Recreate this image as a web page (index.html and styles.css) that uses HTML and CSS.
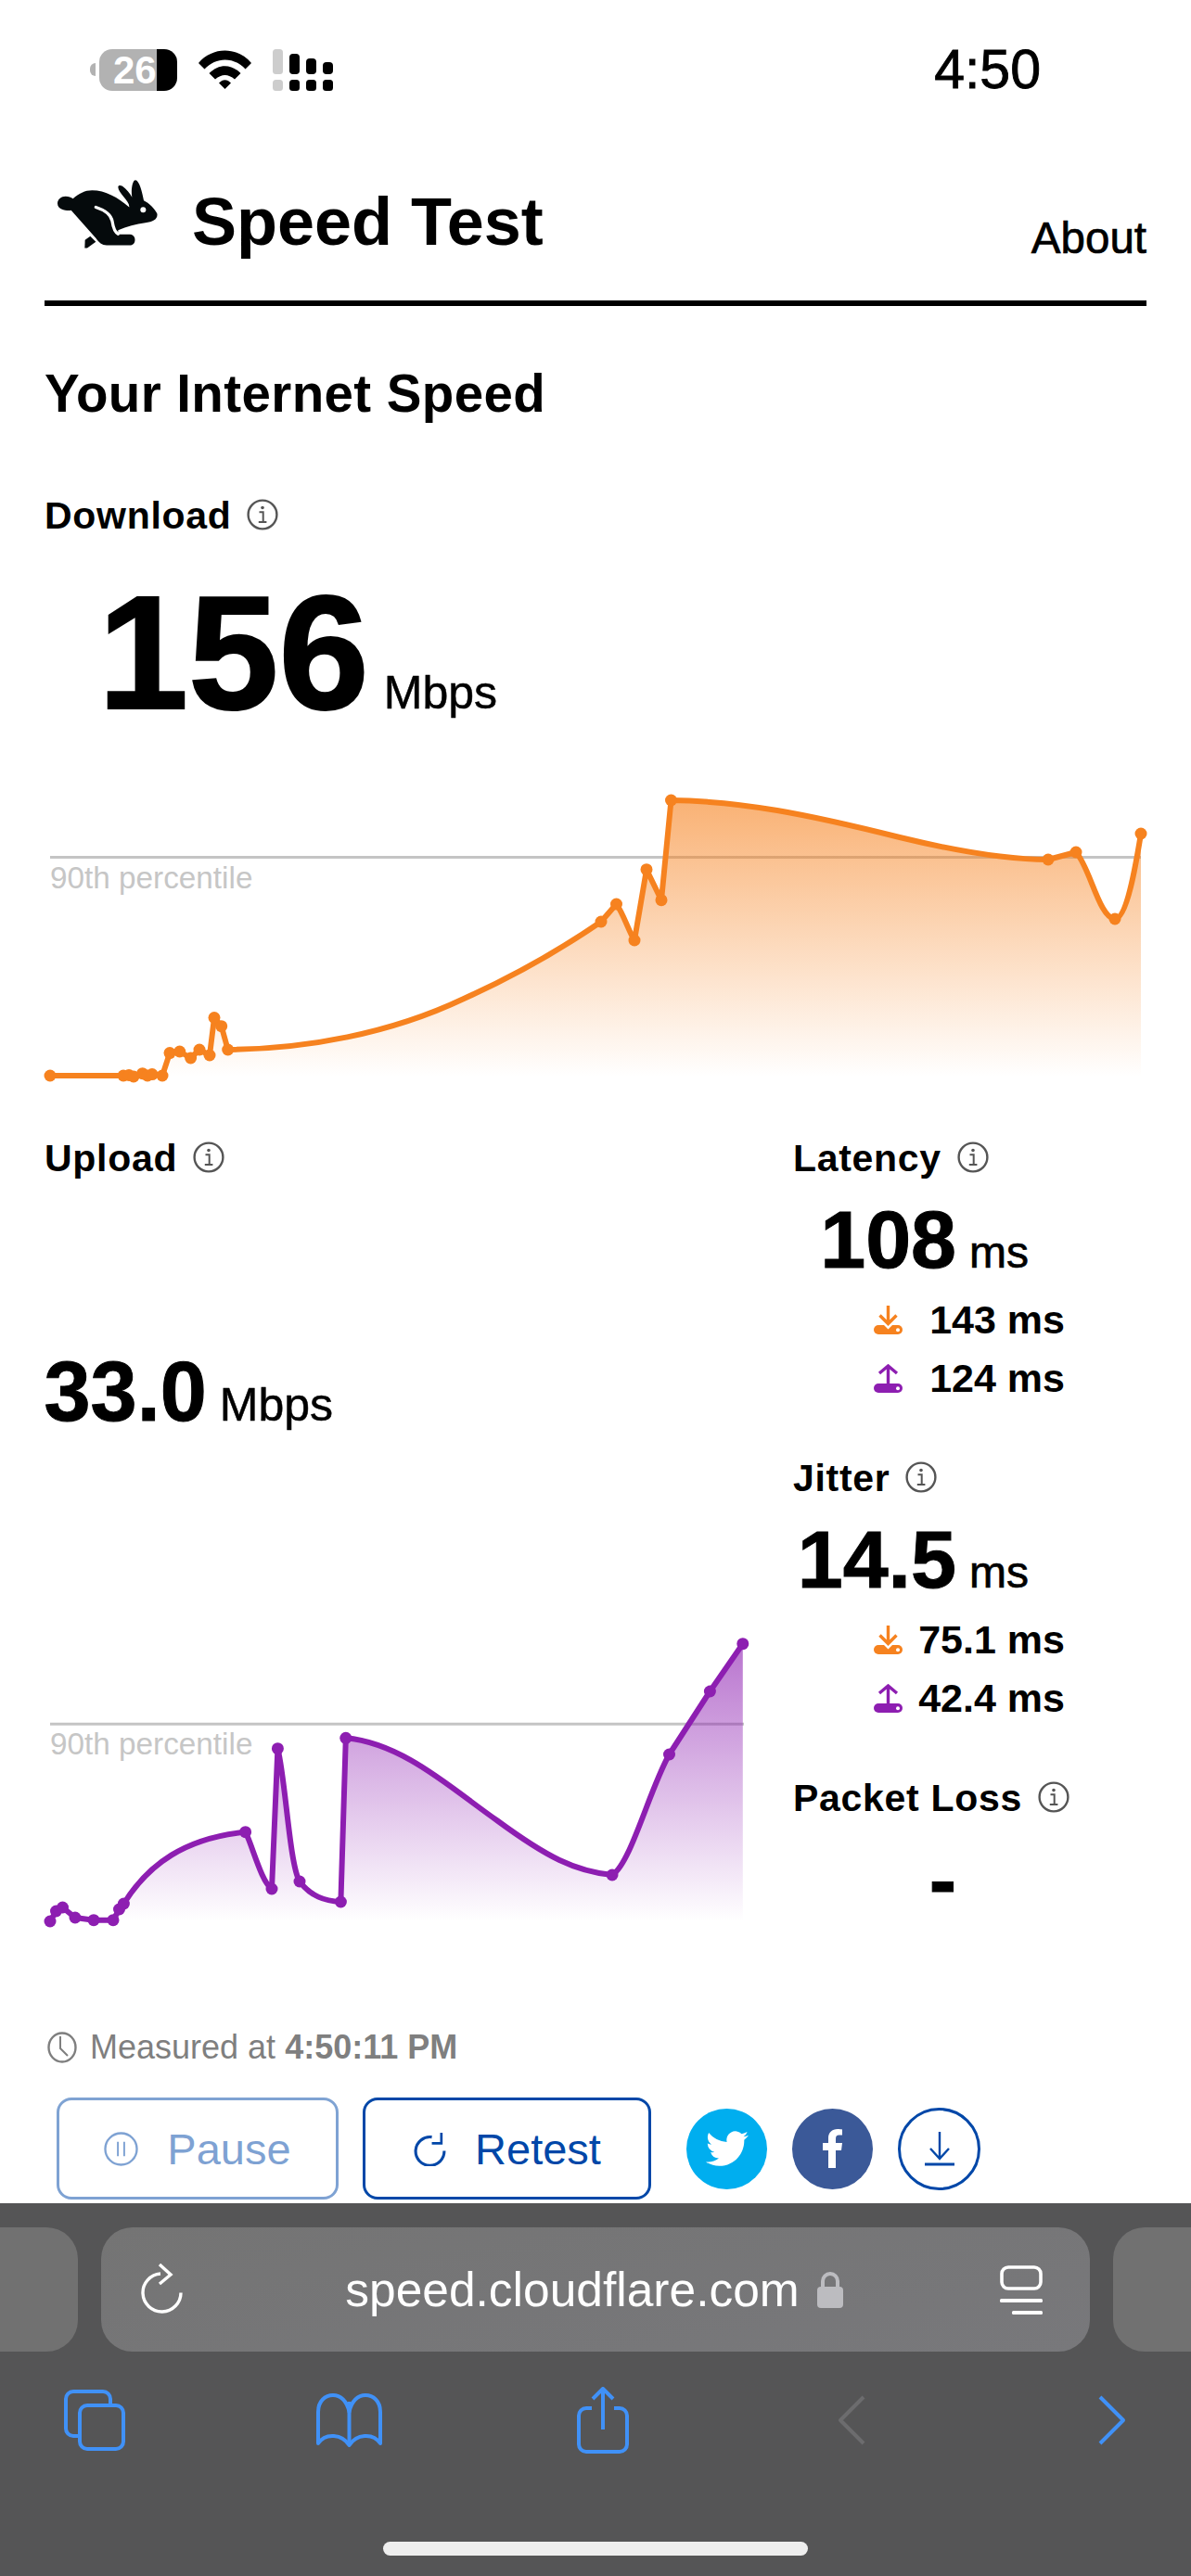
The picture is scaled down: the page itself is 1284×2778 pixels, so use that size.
FILE: index.html
```html
<!DOCTYPE html>
<html lang="en">
<head>
<meta charset="utf-8">
<title>Speed Test</title>
<link rel="stylesheet" href="styles.css">
</head>
<body>
<svg class="defs" width="0" height="0" aria-hidden="true">
  <defs>
    <symbol id="info" viewBox="0 0 34 34">
      <circle cx="17" cy="17" r="15.400" fill="none" stroke="#555" stroke-width="2.400"/>
      <circle cx="17" cy="9.500" r="1.800" fill="#555"/>
      <path d="M13.500 14.200h4.200v10.600M12.800 25h8.600" fill="none" stroke="#555" stroke-width="2"/>
    </symbol>
    <symbol id="down" viewBox="0 0 31 31">
      <rect x="0" y="21" width="31" height="10" rx="5" fill="currentColor"/>
      <circle cx="26" cy="26.200" r="2" fill="#fff"/>
      <path d="M4 12l11.500 11.500L27 12" fill="none" stroke="#fff" stroke-width="3"/>
      <path d="M15.500 0v18M6.500 10.500l9 9 9-9" fill="none" stroke="currentColor" stroke-width="3.400"/>
    </symbol>
    <symbol id="up" viewBox="0 0 31 31">
      <rect x="0" y="21" width="31" height="10" rx="5" fill="currentColor"/>
      <circle cx="26" cy="26.200" r="2" fill="#fff"/>
      <path d="M15.500 2v20M6 10l9.500-8 9.500 8" fill="none" stroke="currentColor" stroke-width="3.400"/>
    </symbol>
    <linearGradient id="fillOrange" x1="0" y1="0" x2="0" y2="1">
      <stop offset="0" stop-color="#f6821f" stop-opacity=".62"/>
      <stop offset="1" stop-color="#f6821f" stop-opacity="0"/>
    </linearGradient>
    <linearGradient id="fillPurple" x1="0" y1="0" x2="0" y2="1">
      <stop offset="0" stop-color="#8d1eb1" stop-opacity=".62"/>
      <stop offset="1" stop-color="#8d1eb1" stop-opacity="0"/>
    </linearGradient>
  </defs>
</svg>

<div class="phone">
  <div class="status">
    <div class="status-left">
      <span class="battery-nub"></span>
      <span class="battery">26</span>
      <svg class="wifi" viewBox="0 0 57 42">
        <path d="M0 14C15-4 42-4 57 14l-6.500 6.500C38 7 19 7 6.500 20.500z"/>
        <path d="M11.500 25C22 14.500 35 14.500 45.500 25L39 31.500C32 25.500 25 25.500 18 31.500z"/>
        <path d="M22 35.500C26 31 31 31 35 35.500L28.500 42z"/>
      </svg>
      <svg class="signal" viewBox="0 0 65 45">
        <rect class="off" x="0" y="0" width="11" height="27" rx="3.500"/>
        <rect class="off" x="0" y="33" width="11" height="12" rx="3.500"/>
        <rect x="18" y="5" width="11" height="22" rx="4"/>
        <rect x="18" y="33" width="11" height="12" rx="3.500"/>
        <rect x="36" y="10" width="11" height="17" rx="4"/>
        <rect x="36" y="33" width="11" height="12" rx="3.500"/>
        <rect x="54" y="14" width="11" height="13" rx="4"/>
        <rect x="54" y="33" width="11" height="12" rx="3.500"/>
      </svg>
    </div>
    <span class="clock-time">4:50</span>
  </div>

  <main class="page">
    <header class="topbar">
      <div class="brand">
        <svg class="rabbit" viewBox="66 492 324 224">
          <path fill="#050a0c" d="M66 568C66 555 78 545 92 545C102 545 110 548 116 552C135 535 155 525 178 525C220 525 262 548 298 580C300 560 262 535 262 515C262 508 270 508 276 512C290 522 300 535 307 548C303 525 308 492 318 492C330 492 340 530 345 558C362 566 380 584 388 600C392 618 375 628 350 630C320 634 290 642 262 654V668H300C322 668 322 703 300 703H225C210 703 200 695 190 680L110 590C100 592 66 590 66 568Z"/>
          <path fill="#050a0c" d="M172 674L190 692L162 712H154L155 686Z"/>
          <path fill="none" stroke="#fff" stroke-width="10" stroke-linecap="round" d="M190 580C215 588 238 600 243 625C246 645 250 660 262 666"/>
          <circle cx="343" cy="588" r="9" fill="#fff"/>
        </svg>
        <h1 class="brand-name">Speed Test</h1>
      </div>
      <a class="about">About</a>
    </header>

    <h2 class="section-title">Your Internet Speed</h2>

    <section>
      <div class="label">Download <svg class="info"><use href="#info"/></svg></div>
      <div class="value value-big"><span class="num-big">156</span><span class="unit">Mbps</span></div>
      <svg class="chart chart-down" viewBox="48 850 1188 320">
        <line class="grid" x1="54" y1="924.500" x2="1230" y2="924.500"/>
        <text class="pct" x="54" y="957.500">90th percentile</text>
        <path class="area-orange" d="M54 1160L133 1160L139 1159.500L144 1161L153.600 1157.700L159 1160L164 1158.600L175 1160L183 1135.600L193.700 1134L205.600 1141L215 1132L226 1138L231 1097.500L238.700 1106.700L245.700 1132C330 1131 420 1115 500 1077C560 1050 610 1020 648 994L664.500 975C672 985 678 1005 684 1014L697 937.700L713 970.700L723.500 863C800 864 870 878 970 903C1040 920 1090 927 1130 927L1160 919C1175 935 1185 990 1202 991C1215 991 1225 930 1230 899V1160Z"/>
        <path class="line-orange" d="M54 1160L133 1160L139 1159.500L144 1161L153.600 1157.700L159 1160L164 1158.600L175 1160L183 1135.600L193.700 1134L205.600 1141L215 1132L226 1138L231 1097.500L238.700 1106.700L245.700 1132C330 1131 420 1115 500 1077C560 1050 610 1020 648 994L664.500 975C672 985 678 1005 684 1014L697 937.700L713 970.700L723.500 863C800 864 870 878 970 903C1040 920 1090 927 1130 927L1160 919C1175 935 1185 990 1202 991C1215 991 1225 930 1230 899"/>
        <g class="dots-orange">
          <circle cx="54" cy="1160" r="6.500"/><circle cx="133" cy="1160" r="6.500"/><circle cx="139" cy="1159.500" r="6.500"/><circle cx="144" cy="1161" r="6.500"/><circle cx="153.600" cy="1157.700" r="6.500"/><circle cx="159" cy="1160" r="6.500"/><circle cx="164" cy="1158.600" r="6.500"/><circle cx="175" cy="1160" r="6.500"/><circle cx="183" cy="1135.600" r="6.500"/><circle cx="193.700" cy="1134" r="6.500"/><circle cx="205.600" cy="1141" r="6.500"/><circle cx="215" cy="1132" r="6.500"/><circle cx="226" cy="1138" r="6.500"/><circle cx="231" cy="1097.500" r="6.500"/><circle cx="238.700" cy="1106.700" r="6.500"/><circle cx="245.700" cy="1132" r="6.500"/><circle cx="648" cy="994" r="6.500"/><circle cx="664.500" cy="975" r="6.500"/><circle cx="684" cy="1014" r="6.500"/><circle cx="697" cy="937.700" r="6.500"/><circle cx="713" cy="970.700" r="6.500"/><circle cx="723.500" cy="863" r="6.500"/><circle cx="1130" cy="927" r="6.500"/><circle cx="1160" cy="919" r="6.500"/><circle cx="1202" cy="991" r="6.500"/><circle cx="1230" cy="899" r="6.500"/>
        </g>
      </svg>
    </section>

    <section class="results">
      <div class="upload">
        <div class="label">Upload <svg class="info"><use href="#info"/></svg></div>
        <div class="value value-upload"><span class="num">33.0</span><span class="unit">Mbps</span></div>
        <svg class="chart chart-up" viewBox="48 1760 760 320">
          <line class="grid" x1="54" y1="1859.300" x2="802" y2="1859.300"/>
          <text class="pct" x="54" y="1892">90th percentile</text>
          <path class="area-purple" d="M54 2072L60.500 2061L67.500 2057L81 2068L101 2070.700L122 2070.700L128.500 2059L133.400 2053C160 2010 200 1982 264.600 1975.700C272 1990 282 2030 293 2037L299.400 1885.700C308 1920 312 2010 323 2029C335 2045 350 2050 367.400 2051L372.800 1874.300C435 1880 488 1930 535.600 1963C590 2003 620 2018 660 2022C680 2010 700 1930 721.500 1892L765.400 1824L800.800 1772.700V2072Z"/>
          <path class="line-purple" d="M54 2072L60.500 2061L67.500 2057L81 2068L101 2070.700L122 2070.700L128.500 2059L133.400 2053C160 2010 200 1982 264.600 1975.700C272 1990 282 2030 293 2037L299.400 1885.700C308 1920 312 2010 323 2029C335 2045 350 2050 367.400 2051L372.800 1874.300C435 1880 488 1930 535.600 1963C590 2003 620 2018 660 2022C680 2010 700 1930 721.500 1892L765.400 1824L800.800 1772.700"/>
          <g class="dots-purple">
            <circle cx="54" cy="2072" r="6.500"/><circle cx="60.500" cy="2061" r="6.500"/><circle cx="67.500" cy="2057" r="6.500"/><circle cx="81" cy="2068" r="6.500"/><circle cx="101" cy="2070.700" r="6.500"/><circle cx="122" cy="2070.700" r="6.500"/><circle cx="128.500" cy="2059" r="6.500"/><circle cx="133.400" cy="2053" r="6.500"/><circle cx="264.600" cy="1975.700" r="6.500"/><circle cx="293" cy="2037" r="6.500"/><circle cx="299.400" cy="1885.700" r="6.500"/><circle cx="323" cy="2029" r="6.500"/><circle cx="367.400" cy="2051" r="6.500"/><circle cx="372.800" cy="1874.300" r="6.500"/><circle cx="660" cy="2022" r="6.500"/><circle cx="721.500" cy="1892" r="6.500"/><circle cx="765.400" cy="1824" r="6.500"/><circle cx="800.800" cy="1772.700" r="6.500"/>
          </g>
        </svg>
      </div>

      <div class="metrics">
        <div class="metric">
          <div class="label">Latency <svg class="info"><use href="#info"/></svg></div>
          <div class="value value-metric"><span class="num num-metric">108</span><span class="unit-ms">ms</span></div>
          <div class="sub"><svg class="arrow arrow-down"><use href="#down"/></svg><span>143 ms</span></div>
          <div class="sub"><svg class="arrow arrow-up"><use href="#up"/></svg><span>124 ms</span></div>
        </div>
        <div class="metric">
          <div class="label">Jitter <svg class="info"><use href="#info"/></svg></div>
          <div class="value value-metric"><span class="num num-metric">14.5</span><span class="unit-ms">ms</span></div>
          <div class="sub"><svg class="arrow arrow-down"><use href="#down"/></svg><span>75.1 ms</span></div>
          <div class="sub"><svg class="arrow arrow-up"><use href="#up"/></svg><span>42.4 ms</span></div>
        </div>
        <div class="metric metric-last">
          <div class="label">Packet Loss <svg class="info"><use href="#info"/></svg></div>
          <div class="value value-metric"><span class="num num-metric">-</span><span class="unit-ms hidden">ms</span></div>
        </div>
      </div>
    </section>

    <div class="measured">
      <svg class="clock" viewBox="0 0 32 34">
        <ellipse cx="16" cy="17" rx="14.500" ry="15.500" fill="none" stroke="#7f7f7f" stroke-width="2.400"/>
        <path d="M14 5v13l8 8" fill="none" stroke="#7f7f7f" stroke-width="2"/>
      </svg>
      <span>Measured at <b>4:50:11 PM</b></span>
    </div>

    <div class="actions">
      <a class="btn btn-pause">
        <svg class="btn-icon" viewBox="0 0 38 38">
          <circle cx="19" cy="19" r="17.500" fill="none" stroke="currentColor" stroke-width="2.400"/>
          <path d="M15.500 11v16M22.500 11v16" stroke="currentColor" stroke-width="2"/>
        </svg>
        Pause
      </a>
      <a class="btn btn-retest">
        <svg class="btn-icon" viewBox="0 0 36 36">
          <path d="M20 5.500A15 15 0 1 0 33 20" fill="none" stroke="currentColor" stroke-width="3"/>
          <path d="M30 1v11H20" fill="none" stroke="currentColor" stroke-width="2.600"/>
        </svg>
        Retest
      </a>
      <a class="round twitter">
        <svg class="twitter-bird" viewBox="0 0 24 24"><path fill="#fff" d="M23.953 4.570a10 10 0 01-2.825.775 4.958 4.958 0 002.163-2.723c-.951.555-2.005.959-3.127 1.184a4.920 4.920 0 00-8.384 4.482C7.690 8.095 4.067 6.130 1.640 3.162a4.822 4.822 0 00-.666 2.475c0 1.710.870 3.213 2.188 4.096a4.904 4.904 0 01-2.228-.616v.060a4.923 4.923 0 003.946 4.827 4.996 4.996 0 01-2.212.085 4.936 4.936 0 004.604 3.417 9.867 9.867 0 01-6.102 2.105c-.390 0-.779-.023-1.170-.067a13.995 13.995 0 007.557 2.209c9.053 0 13.998-7.496 13.998-13.985 0-.210 0-.420-.015-.630A9.935 9.935 0 0024 4.590z"/></svg>
      </a>
      <a class="round facebook">
        <svg class="fb-f" viewBox="0 0 21 42"><path fill="#fff" d="M14 42V23h6l1-8h-7V10.500C14 8 15 6.500 17.500 6.500H21V.5C20 .3 18 0 16 0 10 0 6 4 6 9.500V15H0v8h6v19z"/></svg>
      </a>
      <a class="round save">
        <svg class="save-arrow" viewBox="0 0 32 37">
          <path d="M16 0v28M6 18l10 11 10-11" fill="none" stroke="currentColor" stroke-width="2.400"/>
          <path d="M0 35h32" stroke="currentColor" stroke-width="3"/>
        </svg>
      </a>
    </div>
  </main>

  <footer class="chrome">
    <div class="tabs">
      <div class="tab-peek tab-left"></div>
      <div class="address">
        <svg class="reload" viewBox="0 0 45 54">
          <path d="M21 11A20.500 20.500 0 1 0 43 31.500" fill="none" stroke="#fff" stroke-width="3.400"/>
          <path d="M20 1l12 11-12 10" fill="none" stroke="#fff" stroke-width="3.400"/>
        </svg>
        <div class="url">
          <span>speed.cloudflare.com</span>
          <svg class="lock" viewBox="0 0 28 39">
            <path d="M6 18V10a8 8 0 0 1 16 0v8" fill="none" stroke="#bcbcc0" stroke-width="4"/>
            <rect y="16" width="28" height="23" rx="4" fill="#bcbcc0"/>
          </svg>
        </div>
        <svg class="reader" viewBox="0 0 46 53">
          <rect x="2" y="2" width="42" height="23" rx="7" fill="none" stroke="#fff" stroke-width="3.600"/>
          <rect y="36" width="46" height="4" rx="1.500" fill="#fff"/>
          <rect x="13" y="49" width="33" height="4" rx="1.500" fill="#fff"/>
        </svg>
      </div>
      <div class="tab-peek tab-right"></div>
    </div>
    <nav class="toolbar">
      <svg class="tool tool-tabs" viewBox="0 0 66 66">
        <path d="M50 15v-5a8 8 0 0 0-8-8H10a8 8 0 0 0-8 8v32a8 8 0 0 0 8 8h5"/>
        <rect x="17" y="17" width="47" height="47" rx="8"/>
      </svg>
      <svg class="tool tool-book" viewBox="0 0 71 58">
        <path d="M35.500 9V54"/>
        <path d="M35.500 20C33 8 26 2 18 2C10 2 2 8 2 20V54C10 42 28 44 35.500 56C43 44 61 42 69 54V20C69 8 61 2 53 2C45 2 38 8 35.500 20Z"/>
      </svg>
      <svg class="tool tool-share" viewBox="0 0 56 72">
        <path d="M16 23H10a8 8 0 0 0-8 8V62a8 8 0 0 0 8 8H46a8 8 0 0 0 8-8V31a8 8 0 0 0-8-8H40"/>
        <path d="M28 46V2M17 13L28 2L39 13"/>
      </svg>
      <svg class="tool tool-back" viewBox="0 0 31 54"><path d="M28 2L3 27L28 52"/></svg>
      <svg class="tool tool-forward" viewBox="0 0 31 54"><path d="M3 2L28 27L3 52"/></svg>
    </nav>
    <div class="home-bar"></div>
  </footer>
</div>
</body>
</html>
```

FILE: styles.css
```css
* { box-sizing: border-box; }

html, body {
  margin: 0;
  padding: 0;
  background: #fff;
}

body {
  font-family: "Liberation Sans", Arial, sans-serif;
  color: #000;
}

.defs { position: absolute; }

.phone {
  width: 1284px;
  height: 2778px;
  display: flex;
  flex-direction: column;
  overflow: hidden;
}

/* Status bar */
.status {
  height: 150px;
  flex: none;
  display: flex;
  align-items: center;
  justify-content: space-between;
  padding: 0 162px 0 97px;
}

.status-left {
  display: flex;
  align-items: center;
}

.battery-nub {
  width: 6px;
  height: 14px;
  margin-right: 4px;
  border-radius: 7px 0 0 7px;
  background: #b2b2b2;
}

.battery {
  width: 84px;
  height: 45px;
  border-radius: 14px;
  background: linear-gradient(90deg, #b2b2b2 74%, #000 74%);
  color: #fff;
  font-size: 42px;
  font-weight: 700;
  line-height: 45px;
  padding-left: 15px;
}

.wifi {
  width: 57px;
  height: 42px;
  margin-left: 23px;
  fill: #000;
}

.signal {
  width: 65px;
  height: 45px;
  margin-left: 23px;
  fill: #000;
}

.signal .off { fill: #cdcdcd; }

.clock-time {
  font-size: 59px;
  line-height: 60px;
  -webkit-text-stroke: .9px #000;
}

/* Page */
.page {
  flex: none;
  height: 2226px;
  padding: 0 48px;
}

.topbar {
  height: 180px;
  display: flex;
  justify-content: space-between;
  align-items: flex-start;
  border-bottom: 6px solid #000;
}

.brand {
  display: flex;
  align-items: flex-start;
  padding: 44px 0 0 14px;
}

.rabbit {
  width: 108px;
  height: 75px;
}

.brand-name {
  margin: 5px 0 0 37px;
  font-size: 72px;
  line-height: 80px;
  font-weight: 700;
}

.about {
  margin-top: 81px;
  font-size: 47.500px;
  line-height: 52px;
  -webkit-text-stroke: .7px #000;
}

.section-title {
  margin: 63px 0 0;
  font-size: 56.500px;
  line-height: 64px;
  font-weight: 700;
  letter-spacing: .4px;
}

.label {
  display: flex;
  align-items: center;
  gap: 17px;
  font-size: 41px;
  line-height: 48px;
  font-weight: 700;
  letter-spacing: .7px;
}

.info {
  width: 34px;
  height: 34px;
  margin-top: -2px;
}

section > .label { margin-top: 75px; }

.value {
  display: flex;
  align-items: baseline;
  justify-content: flex-end;
  font-weight: 700;
}

.value-big {
  width: 488px;
  margin-top: 34px;
  gap: 16px;
}

.num-big {
  font-size: 175px;
  line-height: 180px;
  -webkit-text-stroke: 2px #000;
}

.num {
  font-size: 90px;
  line-height: 100px;
  -webkit-text-stroke: 1px #000;
}

.num-metric {
  font-size: 88px;
}

.unit {
  font-size: 50px;
  font-weight: 400;
  -webkit-text-stroke: .5px #000;
}

.unit-ms {
  font-size: 48px;
  font-weight: 400;
  margin-left: 14px;
  -webkit-text-stroke: .7px #000;
}

.hidden { visibility: hidden; }

.chart {
  display: block;
  overflow: visible;
}

.chart-down {
  width: 1188px;
  height: 320px;
  margin-top: 56px;
}

.chart-up {
  width: 760px;
  height: 320px;
  margin-top: 209px;
}

.grid {
  stroke: #c4c4c4;
  stroke-width: 3;
}

.pct {
  fill: #c6c6c6;
  font-size: 33.300px;
}

.area-orange { fill: url(#fillOrange); }
.area-purple { fill: url(#fillPurple); }

.line-orange, .line-purple {
  fill: none;
  stroke-width: 6;
  stroke-linejoin: round;
}

.line-orange { stroke: #f6821f; }
.line-purple { stroke: #8d1eb1; }
.dots-orange { fill: #f6821f; }
.dots-purple { fill: #8d1eb1; }

/* Upload + metrics */
.results {
  display: grid;
  grid-template-columns: 807px 1fr;
  margin-top: 55px;
}

.results .label { margin-top: 0; }

.value-upload {
  width: 311px;
  margin-top: 178px;
  gap: 14px;
}

.metric { height: 345px; }
.metric-last { height: auto; }

.value-metric {
  width: 254px;
  margin-top: 14px;
}

.sub {
  width: 206px;
  height: 63px;
  margin-left: 87px;
  display: flex;
  align-items: center;
  justify-content: space-between;
  font-size: 43px;
  font-weight: 700;
}

.value-metric + .sub { margin-top: 5px; }

.arrow {
  width: 31px;
  height: 31px;
}

.arrow-down { color: #f6821f; }
.arrow-up { color: #8d1eb1; }

.measured {
  display: flex;
  align-items: center;
  gap: 14px;
  margin-top: 108px;
  padding-left: 3px;
  color: #7f7f7f;
  font-size: 36px;
  line-height: 40px;
}

.clock {
  width: 32px;
  height: 34px;
}

/* Buttons */
.actions {
  display: flex;
  align-items: center;
  margin-top: 34px;
  padding-left: 13px;
}

.btn {
  height: 110px;
  display: flex;
  align-items: center;
  justify-content: center;
  border: 3px solid #0047a8;
  border-radius: 16px;
  color: #0047a8;
  font-size: 47px;
}

.btn-pause {
  width: 304px;
  gap: 31px;
  opacity: .5;
}

.btn-retest {
  width: 311px;
  margin-left: 26px;
  gap: 30px;
}

.btn-icon {
  width: 37px;
  height: 37px;
}

.round {
  width: 87px;
  height: 87px;
  flex: none;
  display: flex;
  align-items: center;
  justify-content: center;
  border-radius: 50%;
}

.twitter {
  margin-left: 38px;
  background: #00aeef;
}

.twitter-bird {
  width: 46px;
  height: 46px;
}

.facebook {
  margin-left: 27px;
  background: #3b5998;
}

.fb-f {
  width: 21px;
  height: 42px;
}

.save {
  width: 89px;
  height: 89px;
  margin-left: 27px;
  border: 3px solid #0047a8;
  color: #0047a8;
}

.save-arrow {
  width: 32px;
  height: 37px;
}

/* Safari chrome */
.chrome {
  flex: 1;
  background: #555556;
  padding-top: 26px;
}

.tabs {
  display: flex;
  gap: 25px;
  height: 134px;
}

.tab-peek {
  width: 84px;
  flex: none;
  background: #717171;
}

.tab-left { border-radius: 0 34px 34px 0; }
.tab-right { border-radius: 34px 0 0 34px; }

.address {
  flex: 1;
  display: flex;
  align-items: center;
  justify-content: space-between;
  padding: 0 51px 0 43px;
  border-radius: 34px;
  background: linear-gradient(170deg, #747474, #78787b);
}

.reload {
  width: 45px;
  height: 54px;
  margin-top: -2px;
}

.url {
  display: flex;
  align-items: center;
  gap: 19px;
  margin-left: 6px;
  color: #fff;
  font-size: 51.500px;
  line-height: 60px;
}

.lock {
  width: 28px;
  height: 39px;
}

.reader {
  width: 46px;
  height: 53px;
}

.toolbar {
  display: grid;
  grid-template-columns: repeat(5, 274px);
  align-items: center;
  justify-items: center;
  height: 72px;
  margin: 38px 0 0 -35px;
}

.tool {
  fill: none;
  stroke: #4091f7;
  stroke-width: 4;
  stroke-linejoin: round;
}

.tool-tabs { width: 66px; height: 66px; }
.tool-book { width: 71px; height: 58px; }
.tool-share { width: 56px; height: 72px; }
.tool-back { width: 31px; height: 54px; margin-right: 12px; stroke: #6c6c6e; }
.tool-forward { width: 31px; height: 54px; }

.home-bar {
  width: 458px;
  height: 15px;
  margin: 95px auto 0;
  border-radius: 8px;
  background: #eee;
}
```
